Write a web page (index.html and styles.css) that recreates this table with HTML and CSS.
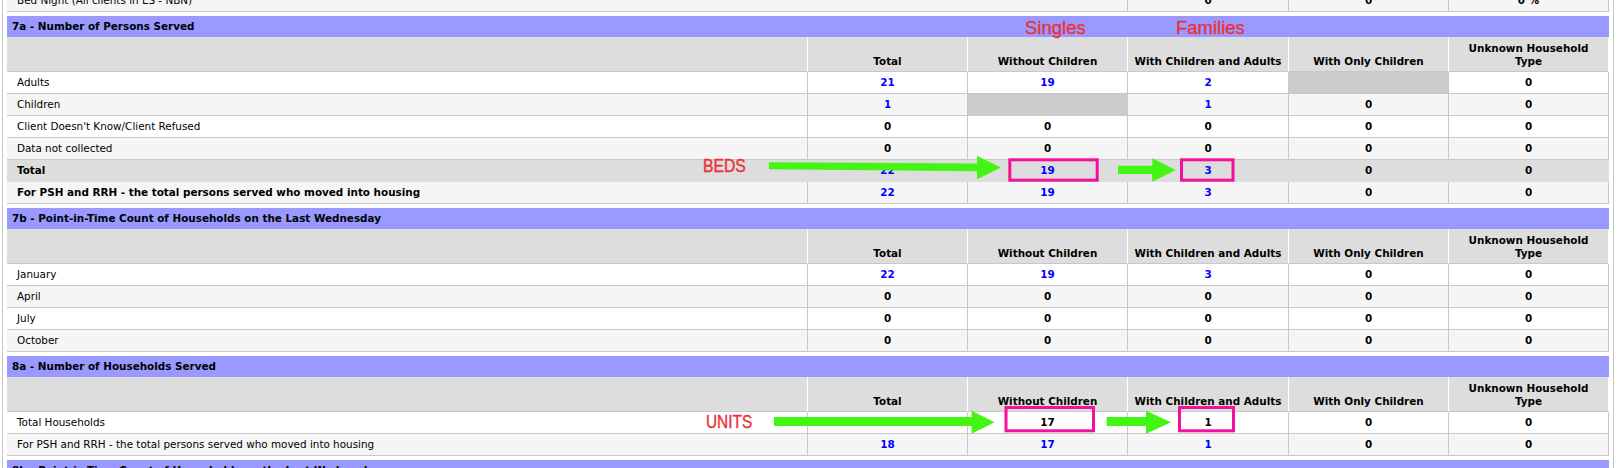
FILE: index.html
```html
<!DOCTYPE html>
<html>
<head>
<meta charset="utf-8">
<title>APR Report</title>
<link rel="stylesheet" href="styles.css">
</head>
<body>
<div class="page">
  <div class="frame">
    <table class="rpt">
      <colgroup><col style="width:1121px"><col style="width:161px"><col style="width:160px"><col style="width:160px"></colgroup>
      <tr class="alt"><td class="lbl">Bed Night (All clients in ES - NBN)</td><td class="num">0</td><td class="num">0</td><td class="num">0 %</td></tr>
    </table>

    <table class="rpt">
      <colgroup><col style="width:801px"><col style="width:160px"><col style="width:160px"><col style="width:161px"><col style="width:160px"><col style="width:160px"></colgroup>
      <tr class="band"><td colspan="6">7a - Number of Persons Served</td></tr>
      <tr class="hdr"><td></td><td>Total</td><td>Without Children</td><td>With Children and Adults</td><td>With Only Children</td><td>Unknown Household Type</td></tr>
      <tr><td class="lbl">Adults</td><td class="num link">21</td><td class="num link">19</td><td class="num link">2</td><td class="num na"></td><td class="num">0</td></tr>
      <tr class="alt"><td class="lbl">Children</td><td class="num link">1</td><td class="num na"></td><td class="num link">1</td><td class="num">0</td><td class="num">0</td></tr>
      <tr><td class="lbl">Client Doesn't Know/Client Refused</td><td class="num">0</td><td class="num">0</td><td class="num">0</td><td class="num">0</td><td class="num">0</td></tr>
      <tr class="alt"><td class="lbl">Data not collected</td><td class="num">0</td><td class="num">0</td><td class="num">0</td><td class="num">0</td><td class="num">0</td></tr>
      <tr class="tot"><td class="lbl b">Total</td><td class="num link">22</td><td class="num link">19</td><td class="num link">3</td><td class="num">0</td><td class="num">0</td></tr>
      <tr class="alt"><td class="lbl b">For PSH and RRH - the total persons served who moved into housing</td><td class="num link">22</td><td class="num link">19</td><td class="num link">3</td><td class="num">0</td><td class="num">0</td></tr>
    </table>

    <table class="rpt">
      <colgroup><col style="width:801px"><col style="width:160px"><col style="width:160px"><col style="width:161px"><col style="width:160px"><col style="width:160px"></colgroup>
      <tr class="band"><td colspan="6">7b - Point-in-Time Count of Households on the Last Wednesday</td></tr>
      <tr class="hdr"><td></td><td>Total</td><td>Without Children</td><td>With Children and Adults</td><td>With Only Children</td><td>Unknown Household Type</td></tr>
      <tr><td class="lbl">January</td><td class="num link">22</td><td class="num link">19</td><td class="num link">3</td><td class="num">0</td><td class="num">0</td></tr>
      <tr class="alt"><td class="lbl">April</td><td class="num">0</td><td class="num">0</td><td class="num">0</td><td class="num">0</td><td class="num">0</td></tr>
      <tr><td class="lbl">July</td><td class="num">0</td><td class="num">0</td><td class="num">0</td><td class="num">0</td><td class="num">0</td></tr>
      <tr class="alt"><td class="lbl">October</td><td class="num">0</td><td class="num">0</td><td class="num">0</td><td class="num">0</td><td class="num">0</td></tr>
    </table>

    <table class="rpt">
      <colgroup><col style="width:801px"><col style="width:160px"><col style="width:160px"><col style="width:161px"><col style="width:160px"><col style="width:160px"></colgroup>
      <tr class="band"><td colspan="6">8a - Number of Households Served</td></tr>
      <tr class="hdr"><td></td><td>Total</td><td>Without Children</td><td>With Children and Adults</td><td>With Only Children</td><td>Unknown Household Type</td></tr>
      <tr><td class="lbl">Total Households</td><td class="num link">18</td><td class="num">17</td><td class="num">1</td><td class="num">0</td><td class="num">0</td></tr>
      <tr class="alt"><td class="lbl">For PSH and RRH - the total persons served who moved into housing</td><td class="num link">18</td><td class="num link">17</td><td class="num link">1</td><td class="num">0</td><td class="num">0</td></tr>
    </table>

    <table class="rpt">
      <colgroup><col style="width:801px"><col style="width:160px"><col style="width:160px"><col style="width:161px"><col style="width:160px"><col style="width:160px"></colgroup>
      <tr class="band"><td colspan="6">8b - Point-in-Time Count of Households on the Last Wednesday</td></tr>
    </table>
  </div>

  <svg class="marks" width="1620" height="468" viewBox="0 0 1620 468">
    <polygon class="arrow" points="769,162.3 977,163.5 977,155.7 1001,167.5 977,179.3 977,171.3 769,169.3"/>
    <polygon class="arrow" points="1118,165.7 1152.3,165.7 1152.3,158.3 1175.7,170 1152.3,181.7 1152.3,174 1118,174"/>
    <rect class="box" x="1009.8" y="159.8" width="87.4" height="20.4"/>
    <rect class="box" x="1181.5" y="159.8" width="51.5" height="20.4"/>
    <polygon class="arrow" points="774,417 971.6,417 971.6,410.7 994.6,422.2 971.6,433.7 971.6,426 774,426"/>
    <polygon class="arrow" points="1106.7,417 1146,417 1146,410.7 1171,422.2 1146,433.7 1146,426 1106.7,426"/>
    <rect class="box" x="1006" y="407.5" width="87.5" height="23.3"/>
    <rect class="box" x="1179.5" y="407.5" width="54" height="23.3"/>
  </svg>

  <div class="note singles">Singles</div>
  <div class="note families">Families</div>
  <div class="note caps beds">BEDS</div>
  <div class="note caps units">UNITS</div>
</div>
</body>
</html>
```
FILE: styles.css
```css
html, body {
  margin: 0;
  padding: 0;
  background: #ffffff;
  overflow: hidden;
}

.page {
  position: relative;
  width: 1620px;
  height: 468px;
  overflow: hidden;
  font-family: "DejaVu Sans", Verdana, sans-serif;
  font-size: 10.4px;
  color: #000;
}

.frame {
  margin: -10px 0 0 2px;
  width: 1605px;
  padding: 0 1px 0 4px;
  border-left: 1px solid #c8c8c8;
  border-right: 1px solid #c8c8c8;
  height: 500px;
}

.rpt {
  table-layout: fixed;
  width: 1602px;
  border-collapse: separate;
  border-spacing: 0;
  margin: 0 0 4px 0;
}

.rpt td {
  padding: 0 3px;
  line-height: 21px;
  white-space: nowrap;
  overflow: hidden;
  border-right: 1px solid #c8c8c8;
  border-bottom: 1px solid #c8c8c8;
  background: #ffffff;
}

.rpt tr.alt td { background: #f5f5f5; }

.rpt td.lbl { padding-left: 10px; }
.rpt td.b { font-weight: bold; }

.rpt td.num {
  text-align: center;
  font-weight: bold;
}

.rpt td.link { color: #0000ff; }

.rpt tr td.na,
.rpt tr.alt td.na { background: #cccccc; }

.rpt tr.tot td {
  background: #dddddd;
  border-right-color: #dddddd;
  border-bottom-color: #dddddd;
}

.rpt tr.band td {
  background: #9999ff;
  font-weight: bold;
  padding-left: 5px;
  border: 0;
  line-height: 21px;
}

.rpt tr.hdr td {
  background: #dddddd;
  font-weight: bold;
  text-align: center;
  vertical-align: bottom;
  white-space: normal;
  line-height: 13px;
  height: 31px;
  padding: 0 5px 3px;
  border-right-color: #ffffff;
}

.marks {
  position: absolute;
  left: 0;
  top: 0;
  pointer-events: none;
}

.marks .arrow { fill: #43f512; }

.marks .box {
  fill: none;
  stroke: #f5109c;
  stroke-width: 3;
}

.note {
  position: absolute;
  font-family: "Liberation Sans", Arial, sans-serif;
  color: #e8333a;
  font-size: 18.5px;
  line-height: 1;
  white-space: nowrap;
  transform-origin: left top;
  -webkit-text-stroke: 0.4px #e8333a;
}

.singles { left: 1025px; top: 18.9px; }
.families { left: 1176px; top: 18.5px; }

.caps {
  font-size: 17.7px;
  transform: scaleX(0.89);
}

.beds { left: 703px; top: 157.7px; }
.units { left: 705.6px; top: 414.4px; transform: scaleX(0.87); }
```
